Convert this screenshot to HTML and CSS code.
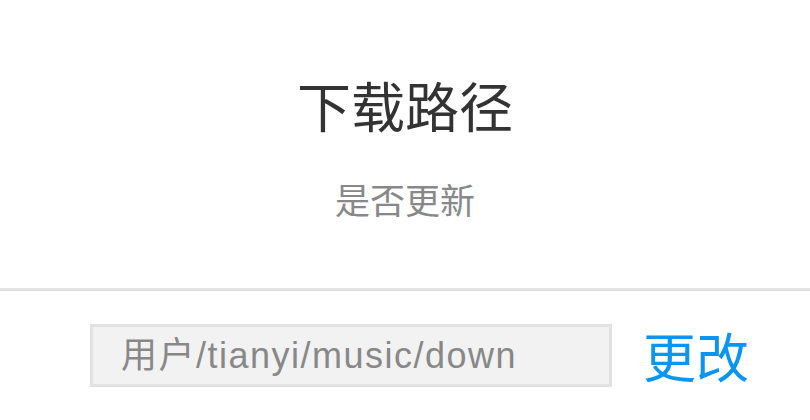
FILE: index.html
```html
<!DOCTYPE html>
<html lang="zh-CN">
<head>
<meta charset="utf-8">
<link rel="stylesheet" href="styles.css">
</head>
<body>
<div class="page">
  <header class="head">
    <h1 class="title">下载路径</h1>
    <p class="subtitle">是否更新</p>
  </header>
  <div class="divider"></div>
  <div class="row">
    <div class="path">用户/tianyi/music/down</div>
    <button class="change">更改</button>
  </div>
</div>
</body>
</html>
```
FILE: styles.css
```css
html, body {
  margin: 0;
  padding: 0;
  background: #fff;
}
body {
  width: 810px;
  height: 420px;
  overflow: hidden;
  font-family: "Liberation Sans", "Noto Sans CJK SC", sans-serif;
}
.page {
  display: flex;
  flex-direction: column;
}
.head {
  display: flex;
  flex-direction: column;
  align-items: center;
  padding-top: 70px;
  height: 288px;
  flex-shrink: 0;
  box-sizing: border-box;
}
.title {
  margin: 0;
  font-family: "Noto Sans CJK SC", sans-serif;
  font-weight: 400;
  font-size: 54px;
  line-height: 70px;
  color: #333;
}
.subtitle {
  margin: 34px 0 0;
  font-family: "Noto Sans CJK SC", sans-serif;
  font-size: 35px;
  line-height: 50px;
  color: #888;
}
.divider {
  height: 3px;
  flex-shrink: 0;
  background: #e2e2e2;
}
.row {
  display: flex;
  align-items: center;
  padding: 33px 0 0 90px;
}
.path {
  box-sizing: border-box;
  width: 522px;
  height: 63px;
  border: 3px solid #e2e2e2;
  background: #f2f2f2;
  color: #888;
  font-size: 36px;
  letter-spacing: 1.5px;
  line-height: 57px;
  padding-left: 28px;
  white-space: nowrap;
  overflow: hidden;
}
.change {
  margin-left: 31px;
  padding: 0;
  border: 0;
  background: none;
  font-family: "Noto Sans CJK SC", sans-serif;
  font-size: 53px;
  line-height: 63px;
  color: #0b95f2;
}
```
